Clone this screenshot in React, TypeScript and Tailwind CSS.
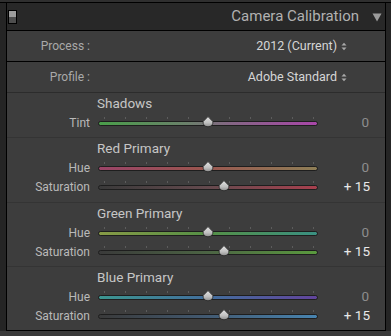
import React from "react";

type SliderProps = {
  label: string;
  value: number;
  gradient: string;
};

const TICKS = Array.from({ length: 11 }, (_, i) => 6 + i * 20.9);

function Thumb() {
  return (
    <svg width="12" height="12" viewBox="0 0 12 12">
      <defs>
        <linearGradient id="tg" x1="0" y1="0" x2="0" y2="1">
          <stop offset="0" stopColor="#e4e4e4" />
          <stop offset="0.6" stopColor="#c0c0c0" />
          <stop offset="1" stopColor="#8c8c8c" />
        </linearGradient>
      </defs>
      <path
        d="M6 0.6 L10.9 5.6 Q11.2 10.4 6 10.8 Q0.8 10.4 1.1 5.6 Z"
        fill="url(#tg)"
        stroke="#262626"
        strokeWidth="0.8"
      />
    </svg>
  );
}

function Slider({ label, value, gradient }: SliderProps) {
  const pos = 110 + value * 1.05;
  const text = value === 0 ? "0" : value > 0 ? `+ ${value}` : `- ${Math.abs(value)}`;
  return (
    <div className="h-[19px] flex items-center">
      <div className="w-[83px] text-right text-[12px] text-[#b9b9b9] leading-none">{label}</div>
      <div className="ml-[8px] w-[220px] h-[19px] relative">
        {TICKS.map((t, i) => (
          <div
            key={i}
            className="absolute w-[1px] h-[2px] bg-[#5c5c5c] top-[4px]"
            style={{ left: `${t}px` }}
          />
        ))}
        <div
          className="absolute left-0 right-0 top-[8px] h-[5px] rounded-full border border-[#1e1e1e]"
          style={{ background: gradient }}
        />
        <div className="absolute top-[3px]" style={{ left: `${pos - 6}px` }}>
          <Thumb />
        </div>
      </div>
      <div
        className={`w-[52px] text-right text-[13.5px] leading-none ${
          value === 0 ? "text-[#8d8d8d] pr-[1px]" : "text-[#e8e8e8]"
        }`}
      >
        {text}
      </div>
    </div>
  );
}

function Section({
  title,
  height,
  children,
  last,
}: {
  title: string;
  height: string;
  children: React.ReactNode;
  last?: boolean;
}) {
  return (
    <div className={`${height} ${last ? "" : "border-b border-[#343434]"} pt-[1px]`}>
      <div className="h-[19px] flex items-center pl-[90px] text-[13.5px] text-[#c6c6c6] leading-none">
        {title}
      </div>
      {children}
    </div>
  );
}

function UpDown() {
  return (
    <svg width="6" height="9" viewBox="0 0 6 9" className="ml-[4px]">
      <path d="M0.5 3.6 L3 0.8 L5.5 3.6 Z" fill="#a9a9a9" />
      <path d="M0.5 5.4 L3 8.2 L5.5 5.4 Z" fill="#a9a9a9" />
    </svg>
  );
}

export default function App() {
  return (
    <div
      className="w-[391px] h-[336px] bg-[#252525] flex flex-col overflow-hidden"
      style={{ fontFamily: 'Roboto, "Open Sans", sans-serif' }}
    >
      <div className="h-[3px] bg-[#2f2f2f] border-b border-black shrink-0" />
      <div className="ml-[6px] w-[380px] border-x border-black flex flex-col shrink-0">
        <div className="h-[27px] bg-[#282828] flex items-center relative">
          <div className="ml-[1px] w-[9px] h-[14px] border border-black flex flex-col">
            <div className="flex-1 bg-[#9c9c9c]" />
            <div className="flex-1 bg-[#4e4e4e]" />
          </div>
          <div className="flex-1 text-right text-[15px] text-[#b1b1b1] leading-none pr-[26px]">
            Camera Calibration
          </div>
          <svg width="10" height="9" viewBox="0 0 10 9" className="absolute right-[3px] top-[10px]">
            <path d="M0.5 0.5 L9.5 0.5 L5 8.5 Z" fill="#9b9b9b" />
          </svg>
        </div>
        <div className="h-[301px] bg-[#3d3d3d] border-y border-black flex flex-col">
          <div className="h-[31px] border-b border-black flex items-center">
            <div className="w-[83px] text-right text-[12px] text-[#a9a9a9] leading-none">Process :</div>
            <div className="flex-1 flex items-center justify-end pr-[38px]">
              <span className="text-[12.5px] text-[#d6d6d6] leading-none">2012 (Current)</span>
              <UpDown />
            </div>
          </div>
          <div className="h-[31px] border-b border-[#2c2c2c] flex items-center">
            <div className="w-[83px] text-right text-[12px] text-[#a9a9a9] leading-none">Profile :</div>
            <div className="flex-1 flex items-center justify-end pr-[38px]">
              <span className="text-[12.5px] text-[#d6d6d6] leading-none">Adobe Standard</span>
              <UpDown />
            </div>
          </div>
          <Section title="Shadows" height="h-[45px]">
            <Slider
              label="Tint"
              value={0}
              gradient="linear-gradient(to right, #4a9e4a 0%, #6a806a 40%, #846684 60%, #a846a8 100%)"
            />
          </Section>
          <Section title="Red Primary" height="h-[65px]">
            <Slider
              label="Hue"
              value={0}
              gradient="linear-gradient(to right, #9a4468 0%, #9a5450 45%, #8e7e56 100%)"
            />
            <Slider
              label="Saturation"
              value={15}
              gradient="linear-gradient(to right, #3a3a3a 0%, #644a4e 50%, #a8404e 100%)"
            />
          </Section>
          <Section title="Green Primary" height="h-[64px]">
            <Slider
              label="Hue"
              value={0}
              gradient="linear-gradient(to right, #879a46 0%, #559046 50%, #3a9082 100%)"
            />
            <Slider
              label="Saturation"
              value={15}
              gradient="linear-gradient(to right, #3a3a3a 0%, #4c6444 50%, #5a9a3e 100%)"
            />
          </Section>
          <Section title="Blue Primary" height="h-[63px]" last>
            <Slider
              label="Hue"
              value={0}
              gradient="linear-gradient(to right, #3c9690 0%, #426e9c 50%, #62449c 100%)"
            />
            <Slider
              label="Saturation"
              value={15}
              gradient="linear-gradient(to right, #3a3a3a 0%, #425a72 50%, #4884b0 100%)"
            />
          </Section>
        </div>
      </div>
      <div className="flex-1 bg-[#3a3a3a]" />
    </div>
  );
}
